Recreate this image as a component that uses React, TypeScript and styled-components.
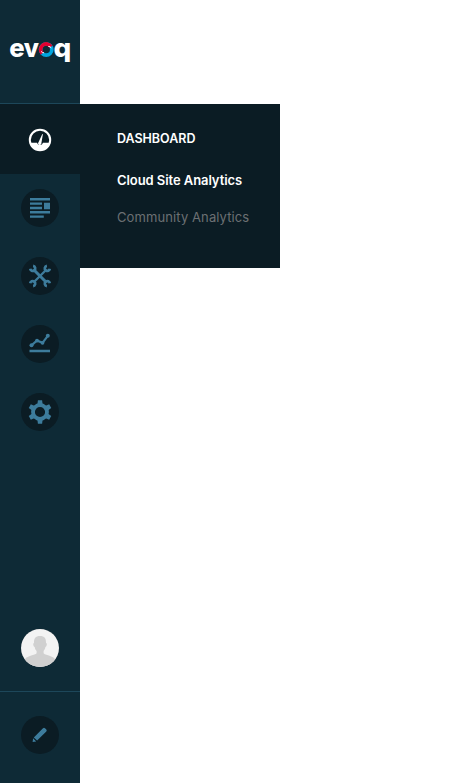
import React from "react";
import styled, { createGlobalStyle } from "styled-components";

const color = {
  bar: "#0e2a36",
  dark: "#0b1c24",
  line: "#1d475a",
  icon: "#3d7c9c",
};

const GlobalStyle = createGlobalStyle`
  body { margin: 0; background: #fff; font-family: Inter, "Liberation Sans", sans-serif; }
  * { box-sizing: border-box; }
  svg { display: block; }
`;

const Page = styled.div`
  display: flex;
  align-items: flex-start;
  height: 783px;
`;

const Sidebar = styled.aside`
  display: flex;
  flex-direction: column;
  width: 80px;
  height: 100%;
  background: ${color.bar};
`;

const Brand = styled.div`
  height: 104px;
  padding-top: 20px;
  border-bottom: 1px solid ${color.line};
`;

const Nav = styled.nav`
  display: flex;
  flex-direction: column;
  flex: 1;
`;

const NavButton = styled.button<{ $active?: boolean }>`
  display: flex;
  align-items: center;
  justify-content: center;
  width: 80px;
  height: ${(p) => (p.$active ? 70 : 68)}px;
  padding: ${(p) => (p.$active ? "2px 0 0" : 0)};
  border: 0;
  background: ${(p) => (p.$active ? color.dark : "transparent")};
`;

const Disc = styled.span`
  display: flex;
  align-items: center;
  justify-content: center;
  width: 38px;
  height: 38px;
  border-radius: 50%;
  overflow: hidden;
  background: ${color.dark};
  color: ${color.icon};
`;

const UserArea = styled.div`
  display: flex;
  justify-content: center;
  height: 63px;
  border-bottom: 1px solid ${color.line};
`;

const EditArea = styled.div`
  display: flex;
  justify-content: center;
  height: 91px;
  padding-top: 24px;
`;

const Panel = styled.section`
  width: 200px;
  height: 164px;
  margin-top: 104px;
  padding: 25px 0 0 37px;
  background: ${color.dark};
`;

const Title = styled.h2`
  margin: 0 0 21px;
  font-size: 12.5px;
  line-height: 20px;
  font-weight: 600;
  letter-spacing: -0.02px;
  color: #fff;
`;

const MenuLink = styled.a<{ $muted?: boolean }>`
  display: block;
  margin-bottom: 17px;
  font-size: 13px;
  line-height: 20px;
  white-space: nowrap;
  font-weight: ${(p) => (p.$muted ? 400 : 600)};
  letter-spacing: ${(p) => (p.$muted ? 0.1 : -0.07)}px;
  color: ${(p) => (p.$muted ? "#6b7073" : "#fff")};
`;

const LogoText = styled.text`
  font-family: Inter, sans-serif;
  font-weight: 800;
  font-size: 26px;
  fill: #fff;
`;

const Logo = () => (
  <svg width="80" height="60" viewBox="0 20 80 60" aria-label="evoq">
    <LogoText x="9.2" y="57" textLength="15.4" lengthAdjust="spacingAndGlyphs">e</LogoText>
    <LogoText x="23.8" y="57" textLength="15.2" lengthAdjust="spacingAndGlyphs">v</LogoText>
    <LogoText x="53.4" y="57" textLength="17.8" lengthAdjust="spacingAndGlyphs">q</LogoText>
    <circle cx="46.2" cy="49.6" r="5.6" fill="none" stroke="#00a5df" strokeWidth="3.7" />
    <path d="M42.2 53.5A5.6 5.6 0 1 1 51 46.7" fill="none" stroke="#e4002f" strokeWidth="3.7" />
    <path d="M48.3 46.4Q50.2 46.3 51.3 47.9M44.1 52.8Q42.3 52.9 41.1 51.4" fill="none" stroke="#fff" strokeWidth="1" />
  </svg>
);

const GaugeIcon = () => (
  <svg width="24" height="24" viewBox="0 0 24 24">
    <circle cx="12" cy="12" r="10.2" fill="none" stroke="#fff" strokeWidth="2" />
    <path d="M1.5 14.7H9A3.1 3.1 0 0 0 15 14.7H22.5A11 11 0 0 1 1.5 14.7Z" fill="#fff" />
    <path d="M10.5 14.2L14.3 6L14.9 6.3L13.4 15A1.7 1.7 0 1 1 10.5 14.2Z" fill="#fff" />
  </svg>
);

const ContentIcon = () => (
  <svg width="22" height="22" viewBox="0 0 22 22" fill="currentColor">
    <path d="M1 1H21V3.4H1ZM1 5.4H13V7.8H1ZM15 5.8H21V12.3H15ZM1 9.8H13V12.2H1ZM1 14H21V16.4H1ZM1 18.4H14.8V20.8H1Z" />
  </svg>
);

const ToolsIcon = () => (
  <svg width="24" height="24" viewBox="0 0 24 24" fill="none" stroke="currentColor">
    <path d="M5.5 5.5L18.5 18.5" strokeWidth="3" />
    <path d="M18.5 5.5L5.5 18.5" strokeWidth="2.3" />
    <path
      d="M2.2 4.8A2.5 2.5 0 0 0 6.2 6.4A2.5 2.5 0 0 0 5.1 1.9M21.8 4.8A2.5 2.5 0 0 1 17.8 6.4A2.5 2.5 0 0 1 18.9 1.9M2.2 19.2A2.5 2.5 0 0 1 6.2 17.6A2.5 2.5 0 0 1 5.1 22.1M21.8 19.2A2.5 2.5 0 0 0 17.8 17.6A2.5 2.5 0 0 0 18.9 22.1"
      strokeWidth="2.7"
    />
  </svg>
);

const ChartIcon = () => (
  <svg width="22" height="22" viewBox="0 0 22 22" fill="currentColor">
    <path d="M2.5 12.3L8 7.5L13.5 9.8L18.8 2.8" fill="none" stroke="currentColor" strokeWidth="2.2" />
    <circle cx="2.5" cy="12.3" r="2" />
    <circle cx="8" cy="7.7" r="1.9" />
    <circle cx="13.5" cy="9.8" r="1.9" />
    <circle cx="18.8" cy="2.8" r="2" />
    <path d="M.5 16.8H21V19.3H.5Z" />
  </svg>
);

const GearIcon = () => (
  <svg width="24" height="24" viewBox="-12 -12 24 24" fill="currentColor">
    <circle r="7" fill="none" stroke="currentColor" strokeWidth="3.8" />
    {[0, 60, 120, 180, 240, 300].map((a) => (
      <path key={a} d="M-2.6 -7.5L-2.1 -11.8H2.1L2.6 -7.5Z" transform={`rotate(${a})`} />
    ))}
  </svg>
);

const PencilIcon = () => (
  <svg width="18" height="18" viewBox="0 0 18 18" fill="currentColor">
    <path d="M2.8 11.4L12 2.2Q13 1.3 14 2.2L15.3 3.5Q16.2 4.5 15.3 5.4L6.1 14.6ZM2.1 12.3L5.2 15.4L1.6 15.9Z" />
  </svg>
);

const Avatar = () => (
  <svg width="38" height="38" viewBox="0 0 38 38">
    <path d="M0 0H38V38H0Z" fill="#f3f3f3" />
    <path
      d="M19 7C23.5 7 25.2 9.6 25 14C26.5 14 25.8 17.5 24.4 18C24 20.2 23.2 21 22.6 22V24.2C24 26.5 31.5 26.3 34 30V38H4V30C6.5 26.3 14 26.5 15.6 24.2V22C14.8 21 14 20.2 13.7 18C12.2 17.5 11.7 14 13 14C12.8 9.6 14.5 7 19 7Z"
      fill="#d0d0d0"
    />
  </svg>
);

export default function App() {
  return (
    <>
      <GlobalStyle />
      <Page>
        <Sidebar>
          <Brand><Logo /></Brand>
          <Nav>
            <NavButton $active aria-label="Dashboard"><GaugeIcon /></NavButton>
            <NavButton aria-label="Content"><Disc><ContentIcon /></Disc></NavButton>
            <NavButton aria-label="Tools"><Disc><ToolsIcon /></Disc></NavButton>
            <NavButton aria-label="Analytics"><Disc><ChartIcon /></Disc></NavButton>
            <NavButton aria-label="Settings"><Disc><GearIcon /></Disc></NavButton>
          </Nav>
          <UserArea><Disc><Avatar /></Disc></UserArea>
          <EditArea><Disc><PencilIcon /></Disc></EditArea>
        </Sidebar>
        <Panel>
          <Title>DASHBOARD</Title>
          <MenuLink>Cloud Site Analytics</MenuLink>
          <MenuLink $muted>Community Analytics</MenuLink>
        </Panel>
      </Page>
    </>
  );
}
